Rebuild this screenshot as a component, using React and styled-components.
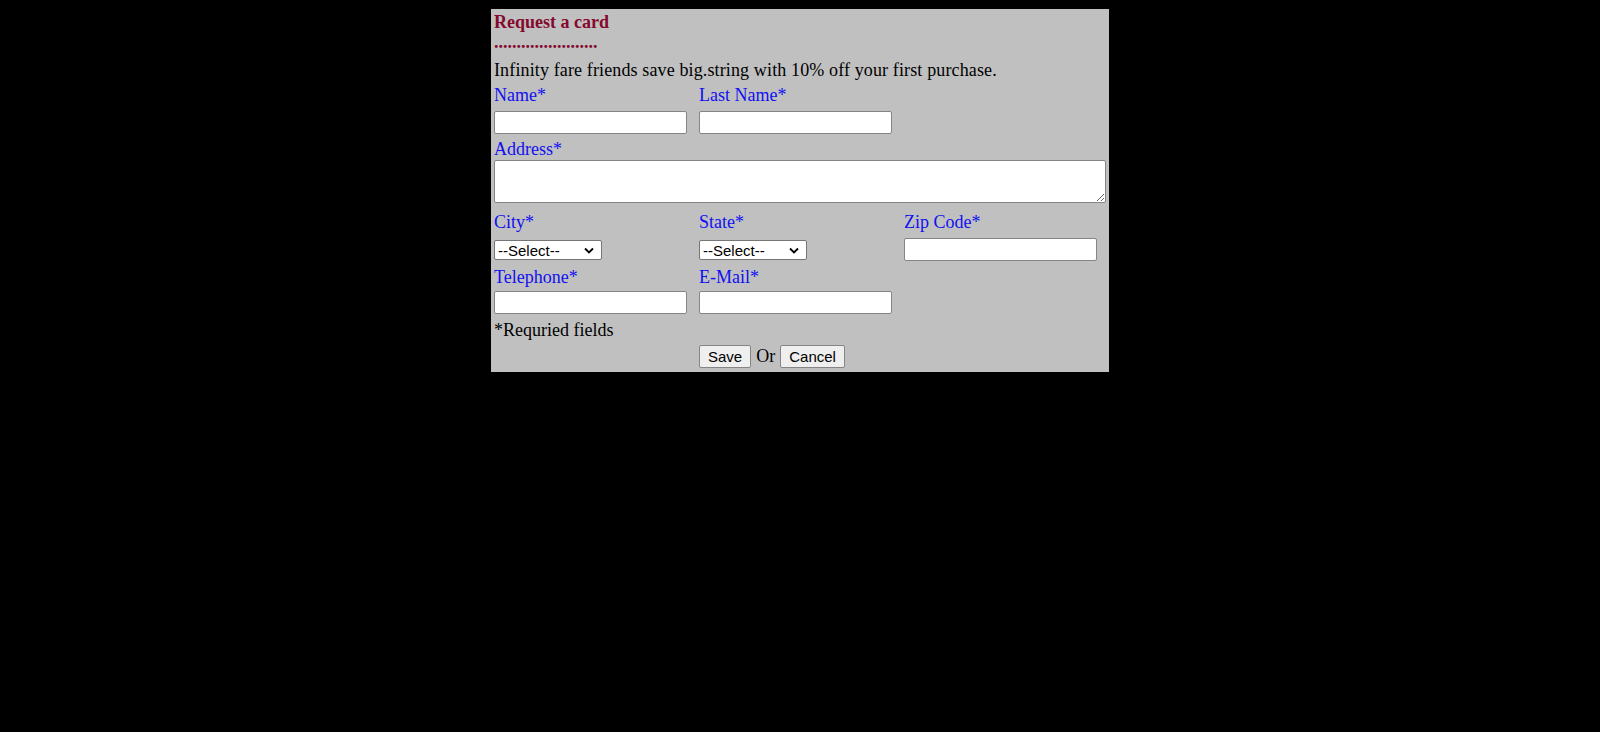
import React from 'react'
import styled, { createGlobalStyle } from 'styled-components'

const GlobalStyle = createGlobalStyle`
html, body {
  margin:0;
  padding:0;
  background:#000;
}
body {
  font-family:"Liberation Serif", "Times New Roman", serif;
  font-size:18px;
}
`

const Panel = styled.form`
width:612px;
margin:9px auto 0;
padding:3px 3px 4px 3px;
background:#c0c0c0;
`

const Title = styled.div`
font-weight:bold;
font-size:18px;
line-height:20px;
color:#85092e;
`

const Dots = styled(Title)``

const Intro = styled.p`
margin:8px 0 0;
line-height:21px;
letter-spacing:0.13px;
color:#000;
`

const Row = styled.div`
display:grid;
grid-template-columns:repeat(3, 201px);
column-gap:4px;
align-items:center;
margin-top:${p => p.$mt || 0}px;
`

const Label = styled.label`
color:#1010f0;
line-height:21px;
`

const TextInput = styled.input`
box-sizing:border-box;
width:193px;
height:23px;
margin:0;
padding:1px 3px;
border:1px solid #858585;
border-radius:2px;
background:#fff;
font:15px "Liberation Sans", Arial, sans-serif;
`

const AreaInput = styled.textarea`
display:block;
box-sizing:border-box;
width:612px;
height:43px;
margin:0;
padding:2px;
border:1px solid #858585;
border-radius:2px;
background:#fff;
font:15px "Liberation Mono", monospace;
resize:both;
`

const PickerWrap = styled.div`
position:relative;
width:108px;
height:20px;
`

const Picker = styled.select`
appearance:none;
-webkit-appearance:none;
box-sizing:border-box;
width:108px;
height:20px;
margin:0;
padding:0 0 0 3px;
border:1px solid #767676;
border-radius:2px;
background:#fff;
color:#000;
font:15px "Liberation Sans", Arial, sans-serif;
`

const Chevron = styled.svg`
position:absolute;
right:8px;
top:7px;
width:10px;
height:7px;
pointer-events:none;
`

const Note = styled.div`
margin-top:6px;
line-height:21px;
color:#000;
`

const Actions = styled.div`
display:flex;
align-items:center;
gap:5px;
margin-top:4px;
margin-left:205px;
height:23px;
`

const Button = styled.button`
box-sizing:border-box;
height:23px;
padding:0 8px;
border:1px solid #858585;
border-radius:2px;
background:#efefef;
color:#000;
font:15px "Liberation Sans", Arial, sans-serif;
`

const OrText = styled.span`
color:#000;
line-height:21px;
`

const SelectBox = () => (
  <PickerWrap>
    <Picker defaultValue="">
      <option value="">--Select--</option>
    </Picker>
    <Chevron viewBox="0 0 10 7">
      <path d="M1 1.5 L5 5.5 L9 1.5" fill="none" stroke="#000" strokeWidth="1.8" />
    </Chevron>
  </PickerWrap>
)

const App = () => {
  return (
    <>
      <GlobalStyle />
      <Panel onSubmit={e => e.preventDefault()}>
        <Title>Request a card</Title>
        <Dots>.......................</Dots>
        <Intro>Infinity fare friends save big.string with 10% off your first purchase.</Intro>

        <Row $mt={4}>
          <Label>Name*</Label>
          <Label>Last Name*</Label>
        </Row>
        <Row $mt={5}>
          <TextInput type="text" />
          <TextInput type="text" />
        </Row>

        <Row $mt={5}>
          <Label>Address*</Label>
        </Row>
        <AreaInput />

        <Row $mt={9}>
          <Label>City*</Label>
          <Label>State*</Label>
          <Label>Zip Code*</Label>
        </Row>
        <Row $mt={5}>
          <SelectBox />
          <SelectBox />
          <TextInput type="text" />
        </Row>

        <Row $mt={6}>
          <Label>Telephone*</Label>
          <Label>E-Mail*</Label>
        </Row>
        <Row $mt={3}>
          <TextInput type="text" />
          <TextInput type="text" />
        </Row>

        <Note>*Requried fields</Note>
        <Actions>
          <Button type="button">Save</Button>
          <OrText>Or</OrText>
          <Button type="button">Cancel</Button>
        </Actions>
      </Panel>
    </>
  )
}

export default App
